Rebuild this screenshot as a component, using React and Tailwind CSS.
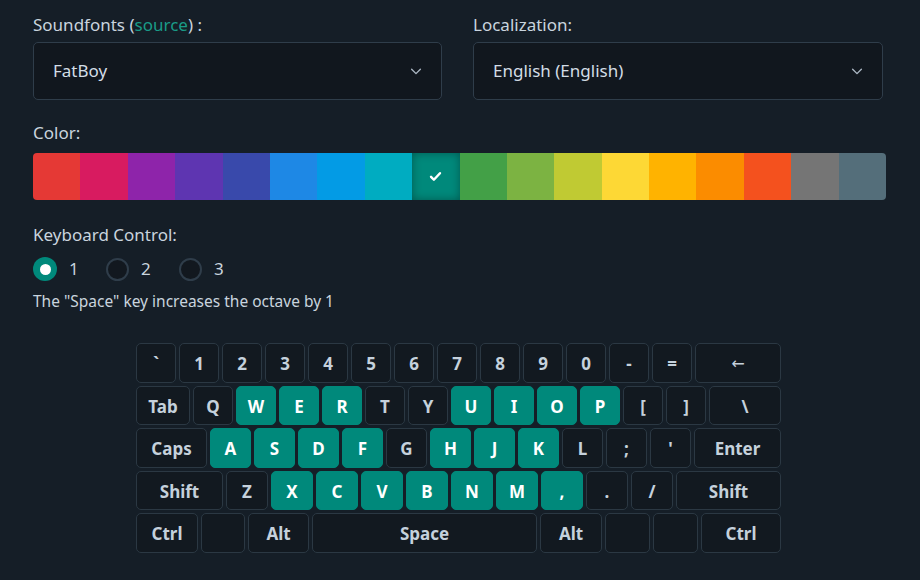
import React from "react";

const COLORS = [
  "#e53935", "#d81b60", "#8e24aa", "#5e35b1", "#3949ab", "#1e88e5",
  "#039be5", "#00acc1", "#00897b", "#43a047", "#7cb342", "#c0ca33",
  "#fdd835", "#ffb300", "#fb8c00", "#f4511e", "#757575", "#546e7a",
];

const ACTIVE = new Set(["W","E","R","U","I","O","P","A","S","D","F","H","J","K","X","C","V","B","N","M",","]);

function Key({ label, w }) {
  const active = ACTIVE.has(label);
  const arrow = label === "←";
  return (
    <div
      className={
        "h-full flex items-center justify-center rounded-[5px] border shrink-0 pt-[2px] " +
        (arrow ? "text-[16px] font-normal font-['DejaVu_Sans'] " : "text-[17px] font-bold ") +
        (active
          ? "bg-[#00897b] border-[#00897b] text-white"
          : "bg-[#121920] border-[#2b3843] text-[#c5d1dc]")
      }
      style={{ width: w }}
    >
      {label}
    </div>
  );
}

function Row({ keys }) {
  return (
    <div className="flex gap-[3px] h-[39.5px]">
      {keys.map(([l, w], i) => (
        <Key key={i} label={l} w={w} />
      ))}
    </div>
  );
}

const r = (s, w) => s.split(" ").map((c) => [c, w]);

const ROWS = [
  [...r("` 1 2 3 4 5 6 7 8 9 0 - =", 40), ["←", 86]],
  [["Tab", 54], ...r("Q W E R T Y U I O P [ ]", 40), ["\\", 72]],
  [["Caps", 71], ...r("A S D F G H J K L ; '", 41), ["Enter", 87]],
  [["Shift", 87], ...r("Z X C V B N M , . /", 42), ["Shift", 105]],
  [["Ctrl", 62], ["", 44], ["Alt", 61], ["Space", 225], ["Alt", 62], ["", 45], ["", 45], ["Ctrl", 80]],
];

function Chevron() {
  return (
    <svg width="14" height="14" viewBox="0 0 16 16" fill="none" stroke="#aab6c2" strokeWidth="1.6" strokeLinecap="round" strokeLinejoin="round">
      <path d="M3 6l5 5 5-5" />
    </svg>
  );
}

function Select({ value }) {
  return (
    <div className="h-[58px] rounded-[5px] border border-[#2f3d4a] bg-[#11171e] flex items-center justify-between pl-[19px] pr-[18px]">
      <span className="text-[17px] text-[#d3dde6]">{value}</span>
      <Chevron />
    </div>
  );
}

export default function App() {
  return (
    <div
      className="w-[920px] h-[580px] bg-[#151e27] text-[#c9d4de] overflow-hidden"
      style={{ fontFamily: '"Noto Sans", "Open Sans", sans-serif' }}
    >
      <div className="pl-[33px] pr-[34px] pt-[12px]">
        <div className="flex gap-[31px]">
          <div className="w-[409px]">
            <div className="text-[17px] h-[26px] leading-[26px] mb-[4px]">
              Soundfonts (<span className="text-[#1a9b87]">source</span>) :
            </div>
            <Select value="FatBoy" />
          </div>
          <div className="w-[410px]">
            <div className="text-[17px] h-[26px] leading-[26px] mb-[4px]">Localization:</div>
            <Select value="English (English)" />
          </div>
        </div>

        <div className="text-[17px] h-[26px] leading-[26px] mt-[20px] mb-[7px]">Color:</div>
        <div className="flex w-[853px] h-[47px] rounded-[4px] overflow-hidden">
          {COLORS.map((c, i) => (
            <div
              key={i}
              className={"flex-1 flex items-center justify-center " + (i === 8 ? "shadow-[inset_0_0_10px_rgba(0,0,0,0.35)]" : "")}
              style={{ backgroundColor: c }}
            >
              {i === 8 && (
                <svg width="13" height="13" viewBox="0 0 16 16" fill="none" stroke="white" strokeWidth="3" strokeLinecap="round" strokeLinejoin="round">
                  <path d="M2.5 8.5l3.5 3.5 7.5-8" />
                </svg>
              )}
            </div>
          ))}
        </div>

        <div className="text-[17px] h-[26px] leading-[26px] mt-[22px]">Keyboard Control:</div>
        <div className="flex items-center h-[26px] mt-[8px]">
          {["1", "2", "3"].map((n, i) => (
            <div key={n} className="flex items-center w-[73px]">
              {i === 0 ? (
                <div className="w-[24px] h-[24px] rounded-full bg-[#00897b] flex items-center justify-center">
                  <div className="w-[11px] h-[11px] rounded-full bg-white" />
                </div>
              ) : (
                <div className="w-[23px] h-[23px] rounded-full border-2 border-[#2f3d4a] bg-[#12181f]" />
              )}
              <span className="ml-[12px] text-[17px] text-[#c9d4de]">{n}</span>
            </div>
          ))}
        </div>
        <div className="text-[15.5px] h-[22px] leading-[22px] mt-[8px] text-[#c9d4de]">
          The "Space" key increases the octave by 1
        </div>

        <div className="flex mt-[31px] ml-[103px]">
          <div className="w-[645px] flex flex-col gap-[3px]">
            {ROWS.map((row, i) => (
              <Row key={i} keys={row} />
            ))}
          </div>
        </div>
      </div>
    </div>
  );
}
